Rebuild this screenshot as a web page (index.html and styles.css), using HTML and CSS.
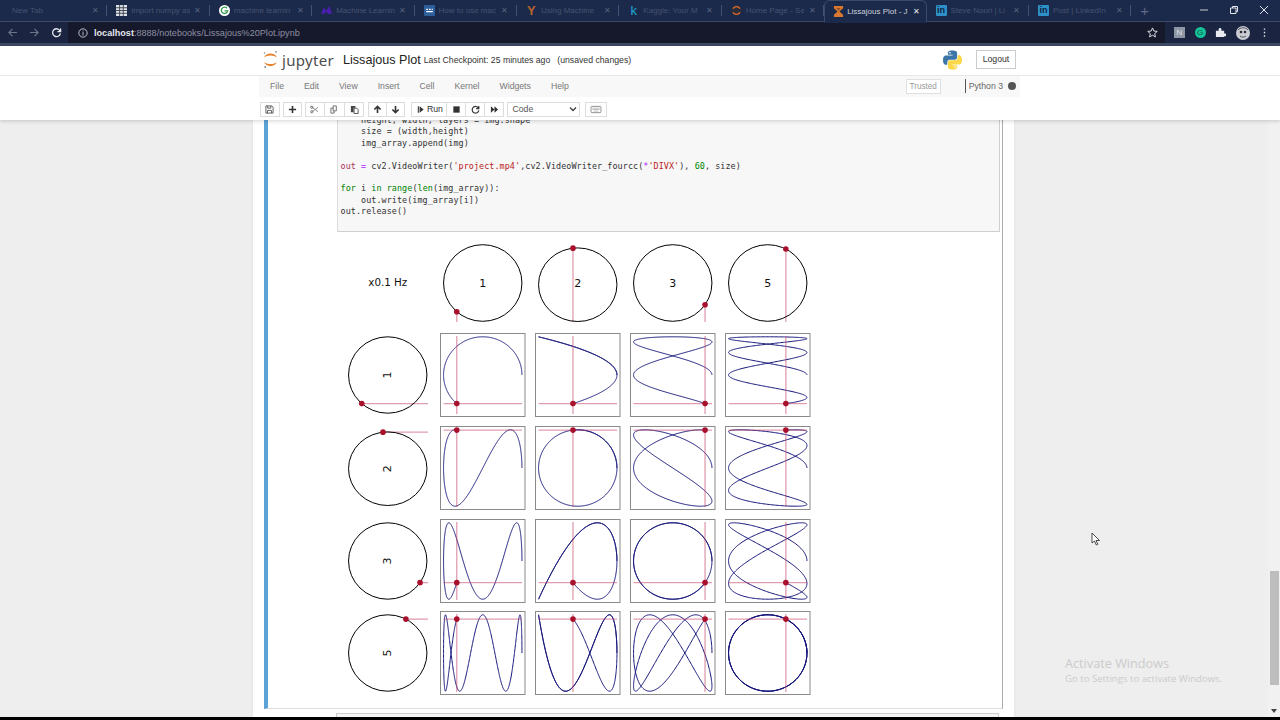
FILE: index.html
```html
<!DOCTYPE html>
<html lang="en">
<head>
    <meta charset="UTF-8">
    <meta name="viewport" content="width=device-width, initial-scale=1.0">
    <title>Lissajous Plot - Jupyter Notebook</title>
    <link rel="stylesheet" href="styles.css">
</head>
<body>

<div class="browser">

    <div class="tabstrip">
        <div class="tab"><span class="tab-title tab-title--first">New Tab</span><span class="tab-close">&#10005;</span></div>
        <div class="tab">
            <svg class="favicon" viewBox="0 0 10 10"><rect width="10" height="10" fill="#dfe3e8"/><path d="M3.3 0v10M6.6 0v10M0 2.5h10M0 5h10M0 7.5h10" stroke="#333a4a" stroke-width=".8"/></svg>
            <span class="tab-title">import numpy as</span><span class="tab-close">&#10005;</span>
        </div>
        <div class="tab">
            <svg class="favicon" viewBox="0 0 12 12"><circle cx="6" cy="6" r="6" fill="#fff"/><path d="M8.8 3.6A3.5 3.5 0 1 0 9.5 6.4H6" fill="none" stroke="#3a9a55" stroke-width="1.5"/></svg>
            <span class="tab-title">machine learnin</span><span class="tab-close">&#10005;</span>
        </div>
        <div class="tab">
            <svg class="favicon" viewBox="0 0 12 12"><path d="M0 9l3-6 3 3 3-5 3 8-4 1-2-3-3 3z" fill="#4a1fb0"/></svg>
            <span class="tab-title">Machine Learnin</span><span class="tab-close">&#10005;</span>
        </div>
        <div class="tab">
            <svg class="favicon" viewBox="0 0 10 10"><rect width="10" height="10" rx="1" fill="#2f5f9a"/><path d="M2 4h1.5M4.500 4h1.500M7 4h1M2 6h6" stroke="#fff"/></svg>
            <span class="tab-title">How to use mac</span><span class="tab-close">&#10005;</span>
        </div>
        <div class="tab">
            <span class="favicon-letter favicon-letter--y">Y</span>
            <span class="tab-title">Using Machine</span><span class="tab-close">&#10005;</span>
        </div>
        <div class="tab">
            <span class="favicon-letter favicon-letter--k">k</span>
            <span class="tab-title">Kaggle: Your M</span><span class="tab-close">&#10005;</span>
        </div>
        <div class="tab">
            <svg class="favicon" viewBox="0 0 12 12"><circle cx="6" cy="6" r="5.500" fill="#2a2d3a"/><path d="M2 4c2-3 6-3 8 0M2 8c2 3 6 3 8 0" fill="none" stroke="#e0692a" stroke-width="1.300"/></svg>
            <span class="tab-title">Home Page - Se</span><span class="tab-close">&#10005;</span>
        </div>
        <div class="tab tab--active">
            <svg class="favicon" viewBox="0 0 10 12"><path d="M0 0h10v2.500L6 6l4 3.500V12H0V9.500L4 6 0 2.500z" fill="#d9782f"/><path d="M2.500 2.500h5L5 5z" fill="#7a4a2a"/></svg>
            <span class="tab-title">Lissajous Plot - J</span><span class="tab-close">&#10005;</span>
        </div>
        <div class="tab">
            <span class="favicon-in">in</span>
            <span class="tab-title">Steve Nouri | Li</span><span class="tab-close">&#10005;</span>
        </div>
        <div class="tab">
            <span class="favicon-in">in</span>
            <span class="tab-title">Post | LinkedIn</span><span class="tab-close">&#10005;</span>
        </div>
        <span class="new-tab">+</span>
        <div class="window-controls">
            <svg viewBox="0 0 10 10"><path d="M1 5h8" stroke="#c8ccd6"/></svg>
            <svg viewBox="0 0 10 10"><path d="M1.500 3h5.500v5.500h-5.500zM3.500 3V1.500h5v5H7" fill="none" stroke="#e4e6ec"/></svg>
            <svg viewBox="0 0 10 10"><path d="M1 1l8 8M9 1l-8 8" stroke="#e4e6ec"/></svg>
        </div>
    </div>

    <div class="addressbar">
        <div class="nav-buttons">
            <svg viewBox="0 0 12 12"><path d="M11 6H2M6 2L2 6l4 4" fill="none" stroke="#6c7488" stroke-width="1.200"/></svg>
            <svg viewBox="0 0 12 12"><path d="M1 6h9M6 2l4 4-4 4" fill="none" stroke="#6c7488" stroke-width="1.200"/></svg>
            <svg viewBox="0 0 12 12"><path d="M10 4.500A4.300 4.300 0 1 0 10.300 7M10.500 1.500v3.500H7" fill="none" stroke="#e8eaf0" stroke-width="1.400"/></svg>
        </div>
        <div class="omnibox">
            <svg class="info-icon" viewBox="0 0 12 12"><circle cx="6" cy="6" r="5" fill="none" stroke="#dfe1e8"/><path d="M6 5v4M6 3v1" stroke="#dfe1e8"/></svg>
            <span class="url-host">localhost</span><span class="url-rest">:8888/notebooks/Lissajous%20Plot.ipynb</span>
            <svg class="star-icon" viewBox="0 0 12 12"><path d="M6 1l1.500 3.400 3.700.4-2.800 2.400.8 3.600L6 9 2.800 10.800l.8-3.600L.8 4.800l3.700-.4z" fill="none" stroke="#e8eaf0"/></svg>
        </div>
        <div class="extensions">
            <span class="ext-square">N</span>
            <span class="ext-grammarly">G</span>
            <svg viewBox="0 0 12 12"><path d="M1 4h3V2.500a1.500 1.500 0 0 1 3 0V4h3v3h1a1.500 1.500 0 0 1 0 3h-1v1H1z" fill="#e8eaf0"/></svg>
            <svg class="avatar" viewBox="0 0 14 14"><circle cx="7" cy="7" r="7" fill="#c9ccd2"/><circle cx="5" cy="6" r="1.300" fill="#2a2a30"/><circle cx="9" cy="6" r="1.300" fill="#2a2a30"/><path d="M4 10c2 1.500 4 1.500 6 0" stroke="#55565e" fill="none"/><path d="M2 4c2-3 8-3 10 0" stroke="#55565e" fill="none"/></svg>
            <svg viewBox="0 0 12 12"><path d="M6 1.500v1.500M6 5.250v1.500M6 9v1.500" stroke="#e8eaf0" stroke-width="1.500"/></svg>
        </div>
    </div>

    <header class="site-header">
        <div class="header-row">
            <div class="header-inner header-inner--top">
                <svg class="jupyter-logo" viewBox="0 0 15 19">
                    <path d="M1 7.500C3 2 12 2 14 7.500 11 4.700 4 4.700 1 7.500z" fill="#e8842f"/>
                    <path d="M1 12C4 14.800 11 14.800 14 12 12 17.500 3 17.500 1 12z" fill="#e8842f"/>
                    <circle cx="13" cy="1.800" r=".9" fill="#8a8a8a"/>
                    <circle cx="1.500" cy="3" r=".8" fill="#8a8a8a"/>
                    <circle cx="2.200" cy="17" r="1" fill="#8a8a8a"/>
                </svg>
                <span class="jupyter-word">jupyter</span>
                <span class="notebook-name">Lissajous Plot</span>
                <span class="checkpoint">Last Checkpoint: 25 minutes ago</span>
                <span class="autosave">(unsaved changes)</span>
                <svg class="python-logo" viewBox="0 0 110 110">
                    <path d="M54.900 0C26.800 0 28.600 12.200 28.600 12.200v12.600h26.800v3.800H17.900S0 26.600 0 54.900c0 28.300 15.600 27.300 15.600 27.300h9.300V69s-.5-15.600 15.400-15.600h26.500s14.900.2 14.900-14.400V14.900S84 0 54.900 0zM40.200 8.500a4.800 4.800 0 1 1 0 9.600 4.800 4.800 0 0 1 0-9.600z" fill="#3c76a8"/>
                    <path d="M54.900 0C26.800 0 28.600 12.200 28.600 12.200v12.600h26.800v3.800H17.900S0 26.600 0 54.900c0 28.300 15.600 27.300 15.600 27.300h9.300V69s-.5-15.600 15.400-15.600h26.500s14.900.2 14.900-14.400V14.900S84 0 54.900 0zM40.200 8.500a4.800 4.800 0 1 1 0 9.600 4.800 4.800 0 0 1 0-9.600z" fill="#fbd74a" transform="rotate(180 55 55)"/>
                </svg>
                <span class="logout">Logout</span>
            </div>
        </div>
        <div class="header-inner header-inner--menu">
            <span>File</span>
            <span>Edit</span>
            <span>View</span>
            <span>Insert</span>
            <span>Cell</span>
            <span>Kernel</span>
            <span>Widgets</span>
            <span>Help</span>
            <span class="trusted">Trusted</span>
            <span class="kernel-name">Python 3</span>
            <span class="kernel-dot"></span>
        </div>
        <div class="header-inner header-inner--toolbar">
            <div class="btn-group">
                <span class="btn btn--save"><svg viewBox="0 0 10 10"><path d="M1 1h6.500L9 2.500V9H1zM3 1v2.500h3.500V1M2.800 9V6h4.400v3" fill="none" stroke="#555"/></svg></span>
            </div>
            <div class="btn-group">
                <span class="btn btn--add"><svg viewBox="0 0 10 10"><path d="M5 1v8M1 5h8" stroke="#333" stroke-width="1.800"/></svg></span>
            </div>
            <div class="btn-group">
                <span class="btn btn--edit"><svg viewBox="0 0 10 10"><path d="M1 1.500l8 6M1 8.500l8-6" stroke="#8a8a8a"/><circle cx="2" cy="2.500" r="1.300" fill="none" stroke="#777"/><circle cx="2" cy="7.500" r="1.300" fill="none" stroke="#777"/></svg></span>
                <span class="btn btn--edit"><svg viewBox="0 0 10 10"><path d="M3.500 1h3.500v5.500H3.500zM3.500 3.500H1V9h3.500V6.500" fill="none" stroke="#666"/></svg></span>
                <span class="btn btn--edit"><svg viewBox="0 0 10 10"><path d="M1 1h5v2H4v5H1z" fill="#444"/><path d="M4.500 3.500h3L9 5v4.500H4.500z" fill="none" stroke="#444"/></svg></span>
            </div>
            <div class="btn-group btn-group--move">
                <span class="btn"><svg viewBox="0 0 10 10"><path d="M5 9V2M1.500 5L5 1.500 8.500 5" fill="none" stroke="#333" stroke-width="1.800"/></svg></span>
                <span class="btn"><svg viewBox="0 0 10 10"><path d="M5 1v7M1.500 5L5 8.500 8.500 5" fill="none" stroke="#333" stroke-width="1.800"/></svg></span>
            </div>
            <div class="btn-group btn-group--run">
                <span class="btn btn--run"><svg viewBox="0 0 10 10"><path d="M2 1.500h1.200v7H2zM4 1.500l4.500 3.500L4 8.500z" fill="#333"/></svg>Run</span>
                <span class="btn btn--kernel"><svg viewBox="0 0 10 10"><rect x="1.500" y="1.500" width="7" height="7" fill="#333"/></svg></span>
                <span class="btn btn--kernel"><svg viewBox="0 0 10 10"><path d="M8.300 3.500A3.700 3.700 0 1 0 8.700 6M8.700 1v3H5.700" fill="none" stroke="#333" stroke-width="1.300"/></svg></span>
                <span class="btn btn--kernel"><svg viewBox="0 0 10 10"><path d="M1 1.500L5 5 1 8.500zM5 1.500L9 5 5 8.500z" fill="#333"/></svg></span>
            </div>
            <span class="cell-type">Code<svg viewBox="0 0 8 8"><path d="M1 2.500l3 3 3-3" fill="none" stroke="#444" stroke-width="1.400"/></svg></span>
            <span class="btn btn--keyboard"><svg viewBox="0 0 12 10"><rect x=".5" y="1.500" width="11" height="7" rx="1" fill="none" stroke="#888"/><path d="M2 3.500h8M2 5h8M3.500 6.800h5" stroke="#999" stroke-width=".7"/></svg></span>
        </div>
    </header>

    <main class="page">
        <div class="notebook">
            <div class="cell">
                <pre class="code-area">    height, width, layers = img.shape
    size = (width,height)
    img_array.append(img)

<span class="var">out</span> <span class="op">=</span> cv2.VideoWriter(<span class="str">'project.mp4'</span>,cv2.VideoWriter_fourcc(<span class="op">*</span><span class="str">'DIVX'</span>), <span class="num">60</span>, size)

<span class="kw">for</span> i <span class="kw">in</span> <span class="builtin">range</span>(<span class="builtin">len</span>(img_array)):
    out.write(img_array[i])
out.release()</pre>
                <div class="figure" id="figure"></div>
            </div>
            <div class="next-cell"></div>
        </div>
        <div class="scrollbar">
            <span class="scroll-thumb"></span>
            <span class="scroll-arrow"></span>
        </div>

        <div class="activate">
            <div class="activate-title">Activate Windows</div>
            <div class="activate-sub">Go to Settings to activate Windows.</div>
        </div>
        <svg class="cursor" viewBox="0 0 10 14"><path d="M1 1v10l2.500-2 1.800 4 1.500-.7-1.800-3.800H8.500z" fill="#fff" stroke="#222" stroke-width=".8"/></svg>
    </main>

    <div class="letterbox"></div>
</div>

<script src="plots.js"></script>
</body>
</html>
```

FILE: styles.css
```css
* {
    box-sizing: border-box;
}
body {
    margin: 0;
    font-family: "Liberation Sans", Arial, sans-serif;
    background-color: #eeeeee;
}
.browser {
    width: 1280px;
    height: 720px;
    display: flex;
    flex-direction: column;
    overflow: hidden;
}

/* tabs */
.tabstrip {
    height: 22px;
    flex: none;
    display: flex;
    align-items: stretch;
    padding-left: 5px;
    background-color: #1b2a4a;
    box-shadow: inset 0 -1px 0 #3c4a68;
    font-size: 8px;
}
.tab {
    width: 102.4px;
    flex: none;
    display: flex;
    align-items: center;
    gap: 4px;
    padding: 0 8px 1px 9px;
    color: #465272;
    position: relative;
}
.tab::after {
    content: "";
    position: absolute;
    right: 0;
    top: 5px;
    bottom: 6px;
    width: 1px;
    background-color: #44506c;
}
.tab--active {
    padding: 0 5px 1px 8px;
    gap: 3px;
    background-color: #1b2a4a;
    color: #ccd0da;
    box-shadow: 0 1px 0 #1b2a4a;
    border-radius: 6px 6px 0 0;
    border: 1px solid #3c4a68;
    border-bottom: none;
}
.tab--active::after {
    display: none;
}
.tab-title {
    flex: 1;
    overflow: hidden;
    white-space: nowrap;
}
.tab-title--first {
    margin-left: -2px;
}
.tab-close {
    width: 8px;
    font-size: 8px;
    text-align: center;
    color: #55617f;
}
.tab--active .tab-close {
    color: #e8eaf0;
}
.favicon {
    width: 11px;
    height: 11px;
    flex: none;
}
.favicon-letter {
    width: 11px;
    flex: none;
    font-size: 13px;
    text-align: center;
    font-weight: bold;
}
.favicon-letter--y {
    color: #b8622c;
}
.favicon-letter--k {
    color: #20a8d8;
    font-weight: normal;
}
.favicon-in {
    width: 11px;
    height: 11px;
    flex: none;
    background-color: #2d90c8;
    color: #0f2340;
    border-radius: 1px;
    font-size: 9px;
    font-weight: bold;
    line-height: 11px;
    text-align: center;
}
.new-tab {
    margin-left: 9px;
    font-size: 15px;
    line-height: 21px;
    color: #5d6986;
}
.window-controls {
    margin-left: auto;
    display: flex;
    align-items: center;
    gap: 20px;
    padding: 0 11px 3px 0;
}
.window-controls svg {
    width: 10px;
    height: 10px;
}

/* address bar */
.addressbar {
    height: 24px;
    flex: none;
    display: flex;
    padding-left: 7px;
    background-color: #1b2542;
    border-bottom: 3px solid #3e4964;
}
.nav-buttons {
    width: 61px;
    flex: none;
    display: flex;
    align-items: center;
    gap: 11px;
}
.nav-buttons svg {
    width: 11px;
    height: 11px;
}
.omnibox {
    width: 1097px;
    flex: none;
    display: flex;
    align-items: center;
    padding: 0 7px 0 10px;
    background-color: #16182c;
    font-size: 9.1px;
}
.info-icon {
    width: 10px;
    height: 10px;
    margin-right: 6px;
}
.url-host {
    color: #e4e6ec;
    font-weight: bold;
}
.url-rest {
    color: #8c90a0;
}
.star-icon {
    width: 11px;
    height: 11px;
    margin-left: auto;
}
.extensions {
    flex: 1;
    display: flex;
    align-items: center;
    justify-content: space-between;
    padding: 0 10px 0 9px;
}
.extensions svg {
    width: 11px;
    height: 11px;
}
.extensions .avatar {
    width: 14px;
    height: 14px;
}
.ext-square {
    width: 11px;
    height: 11px;
    background-color: #8e96a5;
    color: #dfe2e8;
    font-size: 8px;
    line-height: 11px;
    text-align: center;
}
.ext-grammarly {
    width: 11px;
    height: 11px;
    border-radius: 50%;
    background-color: #15c39a;
    color: #0d5b4a;
    font-size: 8px;
    line-height: 11px;
    text-align: center;
}

/* jupyter header */
.site-header {
    height: 74px;
    flex: none;
    background-color: #ffffff;
    box-shadow: 0 1px 4px rgba(0, 0, 0, 0.18);
    position: relative;
    z-index: 2;
}
.header-row {
    border-bottom: 1px solid #e7e7e7;
}
.header-inner {
    width: 761px;
    margin-left: 259px;
    display: flex;
    align-items: center;
}
.header-inner--top {
    height: 29px;
    padding: 0 4px 2px;
}
.jupyter-logo {
    width: 15px;
    height: 19px;
    flex: none;
}
.jupyter-word {
    margin-left: 4px;
    width: 61px;
    font-family: "Noto Sans", sans-serif;
    font-size: 15px;
    letter-spacing: 0.3px;
    color: #4e4e4e;
}
.notebook-name {
    font-size: 12.6px;
    color: #222222;
}
.checkpoint {
    margin-left: 3px;
    font-size: 8.7px;
    color: #333333;
}
.autosave {
    margin-left: 7px;
    font-size: 8.7px;
    color: #333333;
}
.python-logo {
    width: 19px;
    height: 20px;
    margin-left: auto;
}
.logout {
    width: 40px;
    height: 19px;
    margin-left: 14px;
    border: 1px solid #cccccc;
    font-size: 8.7px;
    line-height: 17px;
    text-align: center;
    color: #333333;
}
.header-inner--menu {
    height: 21px;
    padding: 0 4px 1px 11px;
    gap: 20px;
    background-color: #f8f8f8;
    font-size: 8.7px;
    color: #777777;
}
.trusted {
    margin-left: auto;
    width: 35px;
    height: 15px;
    border: 1px solid #e0e0e0;
    background-color: #ffffff;
    font-size: 8.2px;
    line-height: 13px;
    text-align: center;
    color: #999999;
}
.kernel-name {
    margin-left: 4px;
    border-left: 1px solid #555555;
    padding-left: 3px;
    color: #666666;
    line-height: 14px;
}
.kernel-dot {
    width: 8px;
    height: 8px;
    margin-left: -15px;
    border-radius: 50%;
    background-color: #555555;
}
.header-inner--toolbar {
    height: 23px;
    padding: 1px 0 0 1px;
    gap: 3px;
}
.btn-group {
    display: flex;
}
.btn-group--move {
    margin-left: 1px;
}
.btn-group--run {
    margin-left: 3px;
}
.btn {
    width: 19px;
    height: 15px;
    display: flex;
    align-items: center;
    justify-content: center;
    gap: 2px;
    border: 1px solid #dddddd;
    background-color: #ffffff;
    font-size: 8.7px;
    color: #333333;
}
.btn + .btn {
    margin-left: -1px;
}
.btn svg {
    width: 9px;
    height: 9px;
}
.btn--save {
    width: 19.5px;
}
.btn--edit {
    width: 20.67px;
}
.btn--run {
    width: 36px;
}
.btn--kernel {
    width: 20px;
}
.btn--keyboard {
    width: 22px;
    margin-left: 2px;
}
.btn--keyboard svg {
    width: 12px;
}
.cell-type {
    width: 73px;
    height: 15px;
    padding: 0 2px 0 4px;
    display: flex;
    align-items: center;
    justify-content: space-between;
    border: 1px solid #dddddd;
    background-color: #ffffff;
    font-size: 8.7px;
    color: #555555;
}
.cell-type svg {
    width: 8px;
    height: 8px;
}

/* notebook */
.page {
    flex: 1;
    min-height: 0;
    display: flex;
    justify-content: space-between;
    overflow: hidden;
    position: relative;
    background-color: #eeeeee;
}
.notebook {
    width: 761px;
    margin-left: 253px;
    padding-left: 11px;
    background-color: #ffffff;
    box-shadow: 0 0 4px rgba(0, 0, 0, 0.06);
}
.cell {
    width: 739px;
    height: 599px;
    padding: 0 2px 0 69px;
    border-left: 4px solid #5ba3d6;
    border-right: 1px solid #ababab;
    border-bottom: 1px solid #dddddd;
}
.code-area {
    margin: -10px 0 0 0;
    padding: 5px 3px 13px 2.5px;
    height: 121.5px;
    background-color: #f7f7f7;
    border: 1px solid #cfcfcf;
    border-top: none;
    border-left-color: #dddddd;
    font-family: "DejaVu Sans Mono", monospace;
    font-size: 8.42px;
    letter-spacing: 0.07px;
    line-height: 11.4px;
    color: #333333;
}
.var {
    color: #a6305a;
}
.op {
    color: #aa22ff;
}
.str {
    color: #ba2121;
}
.kw {
    color: #008000;
}
.builtin {
    color: #008000;
}
.num {
    color: #080;
}
.figure {
    margin: 9px 0 0 8px;
    display: grid;
    grid-template-columns: repeat(5, 85.5px);
    grid-auto-rows: 84px;
    column-gap: 9.5px;
    row-gap: 8.7px;
}
.figure svg {
    display: block;
    width: 85.5px;
    height: 84px;
}
.plot-box {
    fill: #ffffff;
    stroke: #8a8a8a;
    stroke-width: 1;
}
.plot-guide {
    stroke: #c23c60;
    stroke-opacity: 0.5;
    stroke-width: 1.3;
}
.plot-circle {
    fill: none;
    stroke: #000000;
    stroke-width: 1;
}
.plot-curve {
    fill: none;
    stroke: #14147a;
    stroke-width: 1;
}
.plot-dot {
    fill: #a8102c;
}
.plot-label {
    font-family: "DejaVu Sans", sans-serif;
    font-size: 11px;
    fill: #111111;
    text-anchor: middle;
    dominant-baseline: central;
}
.plot-label--corner {
    font-size: 10.3px;
}
.next-cell {
    width: 663px;
    height: 10px;
    margin: 4px 0 0 72px;
    border: 1px solid #cfcfcf;
    background-color: #f7f7f7;
}
.scrollbar {
    width: 12px;
    position: relative;
    background-color: #f1f1f1;
    display: flex;
    flex-direction: column;
    align-items: center;
    padding-top: 451px;
}
.scroll-thumb {
    width: 9px;
    height: 114px;
    background-color: #bdbdbd;
}
.scroll-arrow {
    margin-top: 24px;
    border: 3px solid transparent;
    border-top: 4px solid #444444;
}
.activate {
    position: absolute;
    left: 1065px;
    top: 535px;
    color: #cbcbcb;
    font-family: "Open Sans", sans-serif;
}
.activate-title {
    font-size: 12.7px;
    line-height: 17px;
}
.activate-sub {
    font-size: 9.6px;
    line-height: 13px;
}
.cursor {
    position: absolute;
    left: 1091px;
    top: 412px;
    width: 10px;
    height: 14px;
}
.letterbox {
    height: 3px;
    flex: none;
    background-color: #000000;
}
```

FILE: plots.js
```js
// lissajous figure: frequencies along the top and down the side
const freqs = [1, 2, 3, 5];
const T = 228.5 * Math.PI / 180;
const W = 85.5, H = 84;
const CX = 42.75, CY = 42, RX = 39.2, RY = 38.2;
const SVG_NS = 'http://www.w3.org/2000/svg';

function el(parent, name, attrs, text) {
    const node = document.createElementNS(SVG_NS, name);
    for (const key in attrs) node.setAttribute(key, attrs[key]);
    if (text) node.textContent = text;
    parent.appendChild(node);
    return node;
}

function newCell() {
    return el(document.getElementById('figure'), 'svg', { viewBox: `0 0 ${W} ${H}` });
}

function wheel(freq, horizontal, cy, ry) {
    const svg = newCell();
    const x = CX + RX * Math.cos(freq * T);
    const y = cy - ry * Math.sin(freq * T);
    if (horizontal) {
        el(svg, 'line', { class: 'plot-guide', x1: x, y1: y, x2: CX + RX + 1, y2: y });
    } else {
        el(svg, 'line', { class: 'plot-guide', x1: x, y1: y, x2: x, y2: 81 });
    }
    el(svg, 'ellipse', { class: 'plot-circle', cx: CX, cy: cy, rx: RX, ry: ry });
    el(svg, 'circle', { class: 'plot-dot', cx: x, cy: y, r: 2.8 });
    const labelY = horizontal ? cy : CY;
    const label = el(svg, 'text', { class: 'plot-label', x: CX, y: labelY }, String(freq));
    if (horizontal) label.setAttribute('transform', `rotate(-90 ${CX} ${cy})`);
}

function lissajous(fx, fy) {
    const svg = newCell();
    el(svg, 'rect', { class: 'plot-box', x: 0.5, y: 0.5, width: W - 1, height: H - 1 });
    const pts = [];
    for (let i = 0; i <= 600; i++) {
        const t = T * i / 600;
        pts.push((CX + RX * Math.cos(fx * t)).toFixed(2) + ',' + (CY - RY * Math.sin(fy * t)).toFixed(2));
    }
    const x = CX + RX * Math.cos(fx * T);
    const y = CY - RY * Math.sin(fy * T);
    el(svg, 'polyline', { class: 'plot-curve', points: pts.join(' ') });
    el(svg, 'line', { class: 'plot-guide', x1: x, y1: 3, x2: x, y2: 81 });
    el(svg, 'line', { class: 'plot-guide', x1: 3.5, y1: y, x2: 82, y2: y });
    el(svg, 'circle', { class: 'plot-dot', cx: x, cy: y, r: 2.8 });
}

// top row
const corner = newCell();
el(corner, 'text', { class: 'plot-label plot-label--corner', x: CX, y: CY - 1 }, 'x0.1 Hz');
freqs.forEach(f => wheel(f, false, f === 2 ? 43.7 : 42, f === 2 ? 36.8 : 38.3));

// one row per y frequency
freqs.forEach(fy => {
    wheel(fy, true, fy === 2 ? 42.7 : 42, fy === 2 ? 36.8 : 38.2);
    freqs.forEach(fx => lissajous(fx, fy));
});
```
